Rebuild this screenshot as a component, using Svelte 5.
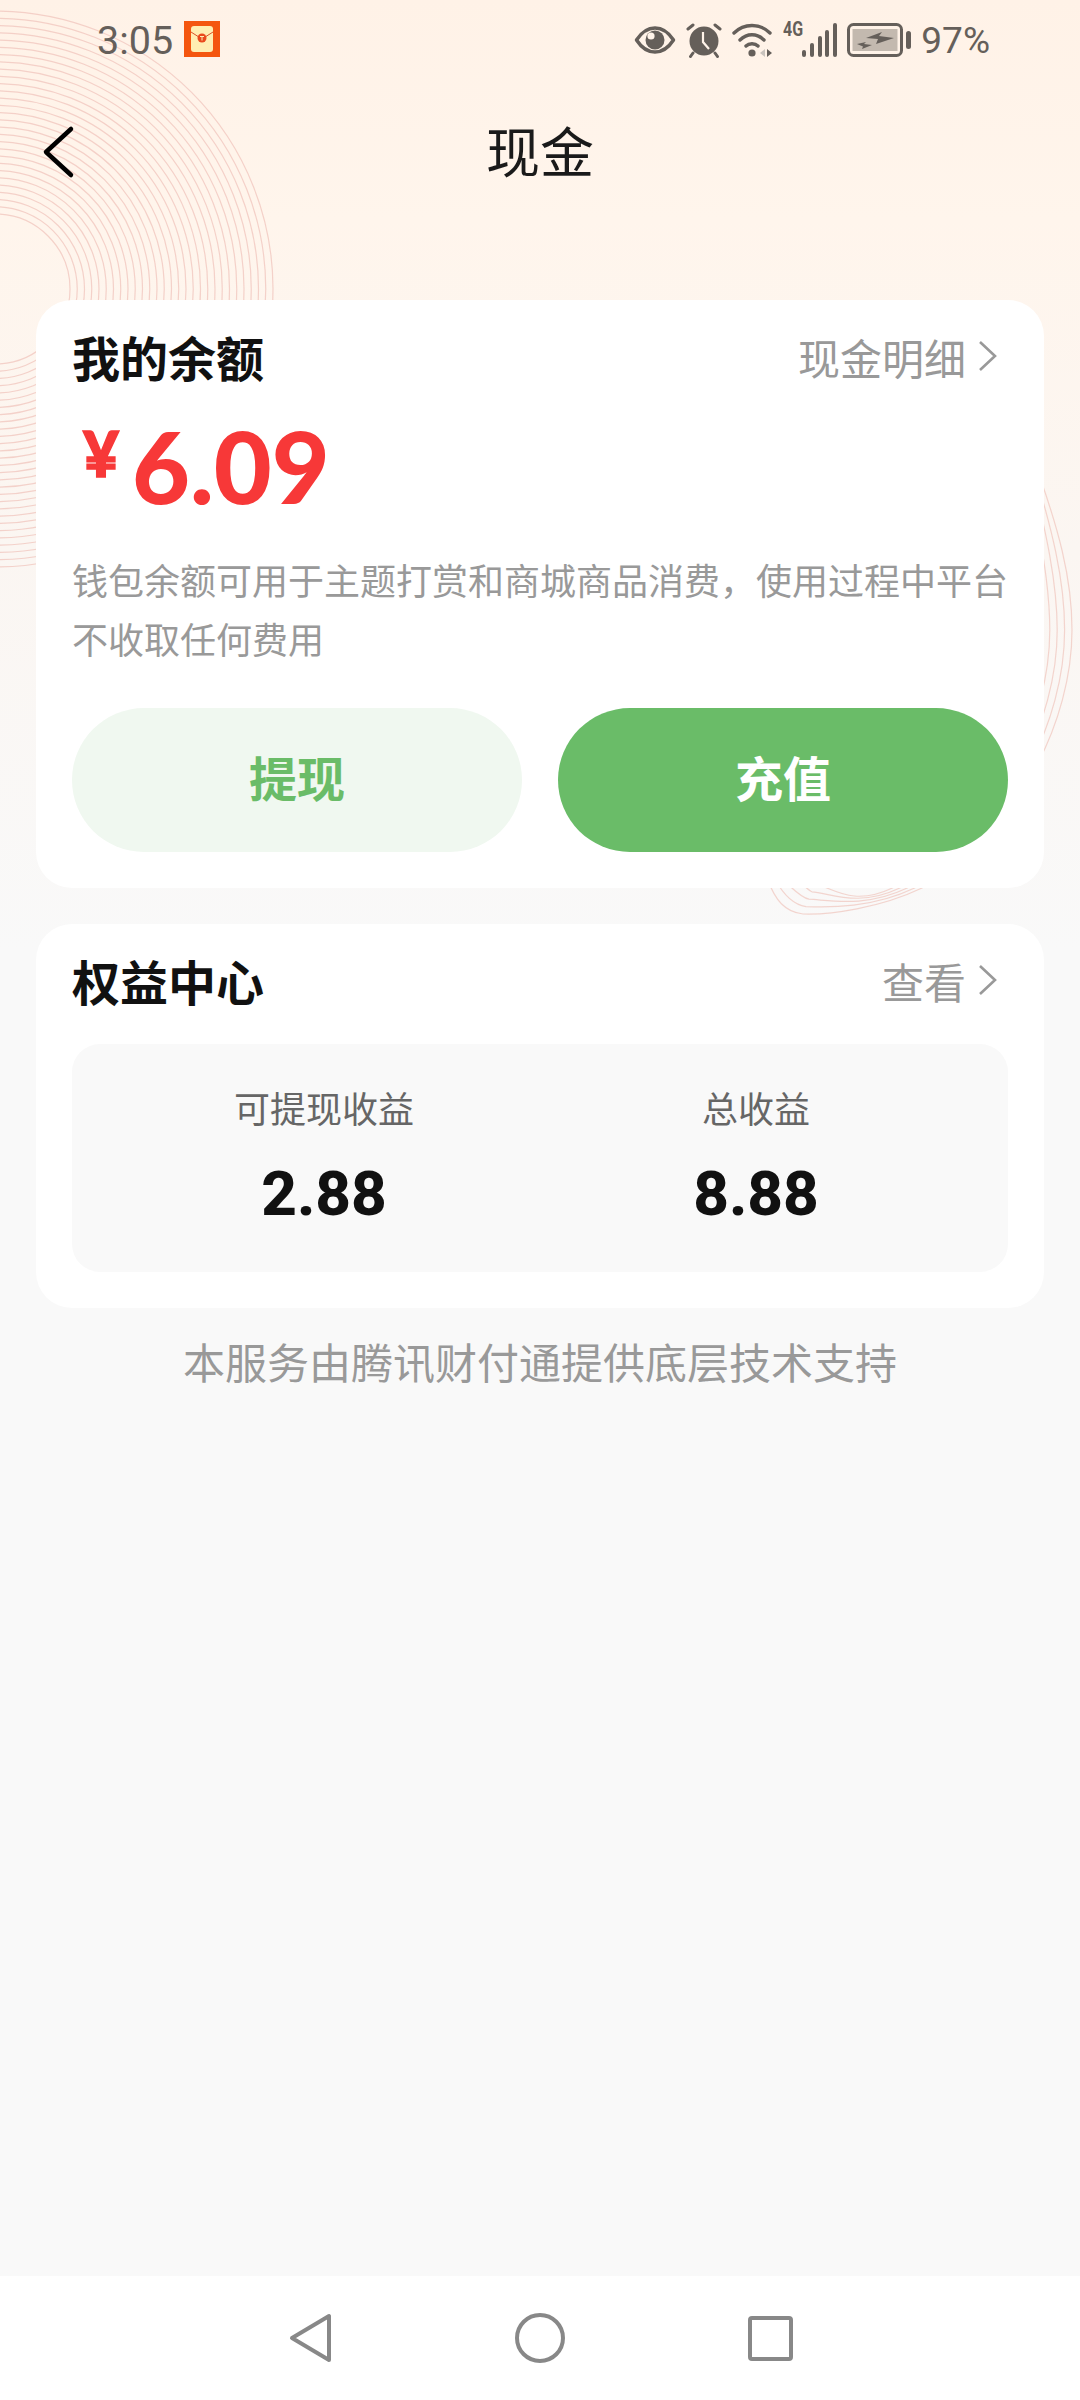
<script>
  // concentric rings behind the top left corner
  const leftRings = Array.from({ length: 29 }, (_, i) => 75 + i * 7.25);

  // the blob on the right is not a true circle, so each ring is an inset copy of one path
  const blobRings = [0, 7.4, 14.8, 22.2, 29.6].map((k) => {
    const r = 1072 - k;
    const b = 914 - k;
    return `M1030 ${450 + k} C${1060 - k} 530 ${r} 580 ${r} 630 C${r} 720 ${1020 - k} 830 ${922 - k} 888 C${880 - k} 908 ${830} ${b + 1} ${803 + k * 0.4} ${b} C${785 + k} ${b - 2} ${775 + k} ${b - 14} ${768 + k} 880`;
  });
</script>

<div class="page">
  <svg class="rings" width="1080" height="950" viewBox="0 0 1080 950" fill="none" aria-hidden="true">
    {#each leftRings as r}
      <circle cx="-5" cy="289" {r} stroke="#f0c4bc" stroke-width="1.2" opacity="0.75" />
    {/each}
    {#each blobRings as d}
      <path {d} stroke="#f0c4bc" stroke-width="1.2" opacity="0.7" />
    {/each}
  </svg>

  <div class="status">
    <div class="status-left">
      <span class="time">3:05</span>
      <svg class="packet" width="36" height="36" viewBox="0 0 36 36">
        <rect width="36" height="36" fill="#f4560f" />
        <rect x="7" y="5" width="22" height="26" rx="3" fill="#ffeeb2" />
        <path d="M7 11 L18 18 L29 11" fill="none" stroke="#d9502a" stroke-width="1" />
        <circle cx="18" cy="17" r="4.5" fill="#ea4a1c" />
        <path d="M16 15.5h4M18 15.5v4" stroke="#ffeeb2" stroke-width="1" />
      </svg>
    </div>
    <div class="status-right">
      <svg width="42" height="30" viewBox="0 0 42 30" fill="none">
        <path d="M2.5 15 C9 5 15 3 21 3 C27 3 33 5 39.5 15 C33 25 27 27 21 27 C15 27 9 25 2.5 15Z" stroke="#655f5a" stroke-width="3.5" stroke-linejoin="round" />
        <circle cx="21" cy="15" r="9.5" fill="#655f5a" />
        <circle cx="17" cy="11" r="3.6" fill="#fff3e9" />
      </svg>
      <svg width="36" height="36" viewBox="0 0 36 36" fill="none">
        <circle cx="18" cy="19" r="14.5" fill="#655f5a" />
        <path d="M17 10 V20 L23 27" stroke="#fff3e9" stroke-width="2.2" />
        <path d="M2 7 L7 3M34 7 L29 3M7 31 L4.5 34.5M29 31 L31.5 34.5" stroke="#655f5a" stroke-width="3" stroke-linecap="round" />
      </svg>
      <svg width="42" height="36" viewBox="0 0 42 36" fill="none">
        <path d="M2 11 C12 1 28 1 38 11M8 18 C15 11 25 11 32 18M14 24 C17 21 23 21 26 24" stroke="#655f5a" stroke-width="3.4" stroke-linecap="round" />
        <circle cx="20" cy="31" r="3.6" fill="#655f5a" />
        <path d="M33 27 V35 L28 31Z" fill="#c9c3bd" />
        <path d="M35 27 V35 L40 31Z" fill="#655f5a" />
      </svg>
      <div class="signal">
        <span class="net">4G</span>
        <svg width="36" height="34" viewBox="0 0 36 34" fill="#655f5a">
          <rect x="1" y="27" width="4" height="7" rx="2" />
          <rect x="9" y="20" width="4" height="14" rx="2" />
          <rect x="17" y="13" width="4" height="21" rx="2" />
          <rect x="24" y="7" width="4" height="27" rx="2" />
          <rect x="32" y="0" width="4" height="34" rx="2" />
        </svg>
      </div>
      <svg width="64" height="34" viewBox="0 0 64 34" fill="none">
        <rect x="1.5" y="1.5" width="53" height="31" rx="5" stroke="#655f5a" stroke-width="3" />
        <rect x="5.5" y="6" width="45" height="22" fill="#c3b9af" />
        <path d="M19 15 L35 9 L32 13 L47 15 L29 21 L31 16Z" fill="#655f5a" />
        <path d="M10 21 L19 19 L17 21 L25 22 L15 26 L16 23.5Z" fill="#655f5a" />
        <rect x="59" y="8" width="5" height="18" rx="2.5" fill="#655f5a" />
      </svg>
      <span class="battery">97%</span>
    </div>
  </div>

  <header class="nav-head">
    <svg class="back" width="34" height="54" viewBox="0 0 34 54" fill="none">
      <path d="M29 4 L4 27 L29 50" stroke="#000" stroke-width="4.5" stroke-linecap="round" stroke-linejoin="round" />
    </svg>
    <h1>现金</h1>
    <span></span>
  </header>

  <main>
    <section class="card balance">
      <div class="card-head">
        <h2>我的余额</h2>
        <span class="link">现金明细
          <svg width="20" height="32" viewBox="0 0 20 32" fill="none"><path d="M2 2 L17 16 L2 30" stroke="#999" stroke-width="2.6" /></svg>
        </span>
      </div>
      <div class="amount"><span class="yen">¥</span><span class="value">6.09</span></div>
      <p class="desc">钱包余额可用于主题打赏和商城商品消费，使用过程中平台不收取任何费用</p>
      <div class="actions">
        <button class="withdraw">提现</button>
        <button class="topup">充值</button>
      </div>
    </section>

    <section class="card rights">
      <div class="card-head">
        <h2>权益中心</h2>
        <span class="link">查看
          <svg width="20" height="32" viewBox="0 0 20 32" fill="none"><path d="M2 2 L17 16 L2 30" stroke="#999" stroke-width="2.6" /></svg>
        </span>
      </div>
      <div class="stats">
        <div class="stat">
          <span class="label">可提现收益</span>
          <span class="num">2.88</span>
        </div>
        <div class="stat">
          <span class="label">总收益</span>
          <span class="num">8.88</span>
        </div>
      </div>
    </section>

    <p class="support">本服务由腾讯财付通提供底层技术支持</p>
  </main>

  <nav class="softkeys">
    <svg width="43" height="50" viewBox="0 0 43 50" fill="none">
      <path d="M40 3 V47 L3 25Z" stroke="#888" stroke-width="4" stroke-linejoin="round" />
    </svg>
    <svg width="50" height="50" viewBox="0 0 50 50" fill="none">
      <circle cx="25" cy="25" r="23" stroke="#888" stroke-width="4" />
    </svg>
    <svg width="45" height="45" viewBox="0 0 45 45" fill="none">
      <rect x="2" y="2" width="41" height="41" rx="2" stroke="#888" stroke-width="4" />
    </svg>
  </nav>
</div>

<style>
  :global(body) {
    margin: 0;
    background: #f9f9f9;
  }

  .page {
    position: relative;
    width: 1080px;
    height: 2400px;
    display: flex;
    flex-direction: column;
    font-family: "Noto Sans CJK SC", "Noto Sans", sans-serif;
    background: linear-gradient(180deg, #fff2e7 0, #fff5ec 220px, #fbf6f2 550px, #f9f9f9 950px);
    overflow: hidden;
  }

  .rings {
    position: absolute;
    top: 0;
    left: 0;
  }

  .status {
    position: relative;
    height: 84px;
    display: flex;
    justify-content: space-between;
    align-items: center;
    padding: 0 90px 4px 97px;
    box-sizing: border-box;
    color: #655f5a;
    font-family: Roboto, sans-serif;
    font-size: 37px;
  }

  .status-left,
  .status-right {
    display: flex;
    align-items: center;
  }

  .status-left {
    gap: 11px;
  }

  .status-right {
    gap: 10px;
  }

  .time {
    font-size: 39.5px;
  }

  .packet {
    margin-top: -2px;
  }

  .signal {
    position: relative;
    width: 53px;
    display: flex;
    justify-content: flex-end;
  }

  .net {
    position: absolute;
    left: -1px;
    top: -4px;
    font-size: 20px;
    font-weight: 700;
    line-height: 1;
    transform: scaleX(0.8);
    transform-origin: left;
  }

  .nav-head {
    position: relative;
    height: 136px;
    display: grid;
    grid-template-columns: 1fr auto 1fr;
    align-items: center;
    padding: 0 42px;
    box-sizing: border-box;
  }

  h1 {
    margin: -6px 0 0;
    font-size: 54px;
    font-weight: 400;
    color: #1a1a1a;
  }

  main {
    position: relative;
    padding: 80px 36px 0;
    display: flex;
    flex-direction: column;
    gap: 36px;
  }

  .card {
    background: #fff;
    border-radius: 36px;
    padding: 26px 36px 36px;
    box-sizing: border-box;
  }

  .balance {
    height: 588px;
  }

  .rights {
    height: 384px;
  }

  .card-head {
    display: flex;
    justify-content: space-between;
    align-items: center;
    height: 60px;
  }

  h2 {
    margin: 0;
    font-size: 48px;
    font-weight: 700;
    color: #111;
    line-height: 60px;
  }

  .link {
    display: flex;
    align-items: center;
    gap: 12px;
    font-size: 42px;
    color: #999;
    padding-right: 10px;
  }

  .amount {
    display: flex;
    align-items: flex-start;
    height: 96px;
    margin-top: 30px;
    padding-left: 11px;
    color: #f73838;
    font-family: Lato, sans-serif;
    font-weight: 900;
  }

  .yen {
    font-size: 62px;
    line-height: 74px;
    margin-right: 13px;
    -webkit-text-stroke: 1.5px #f73838;
  }

  .value {
    font-size: 100px;
    line-height: 98px;
  }

  .desc {
    margin: 38px 0 0;
    font-size: 36px;
    line-height: 59px;
    color: #999;
    height: 120px;
  }

  .actions {
    display: flex;
    justify-content: space-between;
    margin-top: 38px;
  }

  button {
    width: 450px;
    height: 144px;
    padding: 0 0 8px;
    border: none;
    border-radius: 72px;
    font: inherit;
    font-size: 48px;
    font-weight: 700;
  }

  .withdraw {
    background: #f0f8f0;
    color: #6abc68;
  }

  .topup {
    background: #6abc68;
    color: #fff;
  }

  .stats {
    display: grid;
    grid-template-columns: 1fr 1fr;
    height: 228px;
    margin-top: 34px;
    padding: 0 36px;
    box-sizing: border-box;
    background: #f9f9f9;
    border-radius: 28px;
  }

  .stat {
    display: flex;
    flex-direction: column;
    align-items: center;
    padding-top: 37px;
  }

  .label {
    font-size: 36px;
    line-height: 52px;
    color: #666;
  }

  .num {
    margin-top: 26px;
    font-family: Roboto, sans-serif;
    font-size: 62px;
    font-weight: 800;
    line-height: 70px;
    color: #111;
  }

  .support {
    margin: -13px 0 0;
    font-size: 42px;
    line-height: 60px;
    text-align: center;
    color: #999;
  }

  .softkeys {
    position: relative;
    margin-top: auto;
    height: 124px;
    padding-left: 2px;
    box-sizing: border-box;
    background: #fff;
    display: flex;
    justify-content: center;
    align-items: center;
    gap: 183px;
  }
</style>
